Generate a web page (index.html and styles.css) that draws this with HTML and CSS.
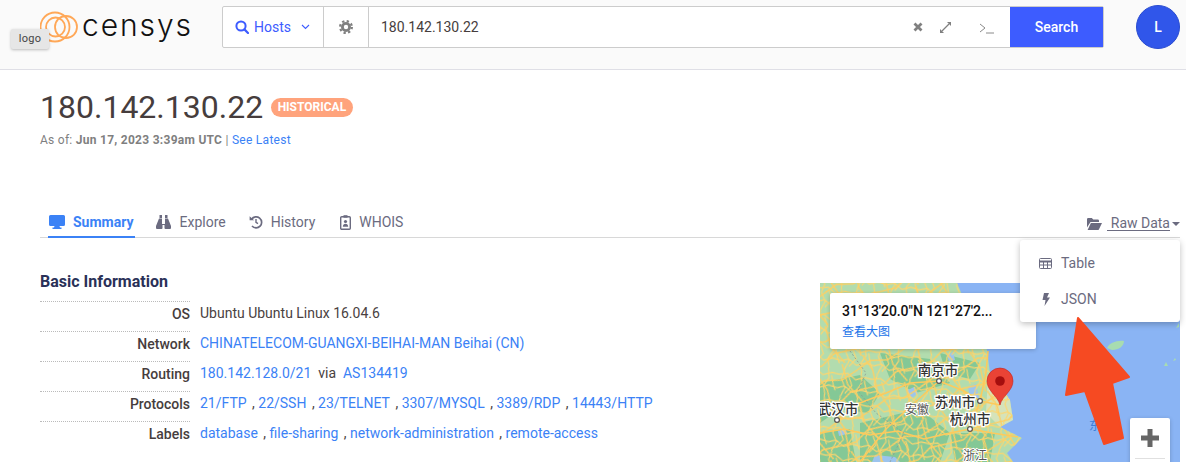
FILE: index.html
```html
<!DOCTYPE html>
<html lang="en">
<head>
<meta charset="utf-8">
<title>180.142.130.22 - Censys</title>
<link rel="stylesheet" href="styles.css">
</head>
<body>
<header class="topbar">
  <div class="brand">
    <svg class="brand-mark" width="42" height="36" viewBox="0 0 42 36"><g fill="none" stroke="#ffa858" stroke-width="1.800"><circle cx="15" cy="18" r="14.500"/><circle cx="15.500" cy="18" r="9.500"/><circle cx="26" cy="18" r="11"/></g></svg>
    <span class="brand-name">censys</span>
    <span class="logo-tip">logo</span>
  </div>
  <div class="search">
    <div class="search-type">
      <svg width="14" height="14" viewBox="0 0 14 14"><circle cx="6" cy="6" r="4.600" fill="none" stroke="#3d5cff" stroke-width="2"/><path d="M9.400 9.400l3.600 3.600" stroke="#3d5cff" stroke-width="2.200" stroke-linecap="round"/></svg>
      <span>Hosts</span>
      <svg class="chev" width="9" height="6" viewBox="0 0 9 6"><path d="M1 1l3.500 3.500L8 1" fill="none" stroke="#3d5cff" stroke-width="1.100"/></svg>
    </div>
    <div class="search-gear">
      <svg width="14" height="14" viewBox="0 0 14 14"><circle cx="7" cy="7" r="3.600" fill="none" stroke="#808080" stroke-width="2.800"/><circle cx="7" cy="7" r="5.900" fill="none" stroke="#808080" stroke-width="2.200" stroke-dasharray="2.300 2.330"/></svg>
    </div>
    <div class="search-input">180.142.130.22</div>
    <div class="search-tools">
      <svg width="10" height="10" viewBox="0 0 10 10"><path d="M1.500 1.500l7 7M8.500 1.500l-7 7" stroke="#808080" stroke-width="2.800"/></svg>
      <svg width="13" height="13" viewBox="0 0 13 13"><path d="M8 1h4v4zM1 12V8l4 4z" fill="#808080"/><path d="M10 3L3 10" stroke="#808080" stroke-width="1.300"/></svg>
      <svg class="term" width="16" height="11" viewBox="0 0 16 11"><path d="M1 1l5 4-5 4" fill="none" stroke="#8a8a8a"/><path d="M7 10h8" stroke="#8a8a8a"/></svg>
    </div>
    <button class="search-btn">Search</button>
  </div>
  <div class="avatar">L</div>
</header>

<main class="page">
  <div class="title-row">
    <h1>180.142.130.22</h1>
    <span class="badge">HISTORICAL</span>
  </div>
  <p class="as-of">As of: <b>Jun 17, 2023 3:39am UTC</b> | <a>See Latest</a></p>

  <nav class="tabs">
    <a class="tab active">
      <svg width="16" height="14" viewBox="0 0 16 14"><path d="M1.500 0h13A1.500 1.500 0 0 1 16 1.500v8a1.500 1.500 0 0 1-1.500 1.500H10.500l.5 1.500h1.500V14h-9v-1.500H5l.5-1.500H1.500A1.500 1.500 0 0 1 0 9.500v-8A1.500 1.500 0 0 1 1.500 0z" fill="#3b82f6"/></svg>
      Summary
    </a>
    <a class="tab tab-explore">
      <svg width="15" height="14" viewBox="0 0 15 14"><path d="M3.500 0h2.500v3h-2.500zM9 0h2.500v3H9zM3 3.500h3V9h3V3.500h3l3 7.500v2a1 1 0 0 1-1 1H9.500a1 1 0 0 1-1-1V10h-2v3a1 1 0 0 1-1 1H1a1 1 0 0 1-1-1v-2z" fill="#6b6b80"/></svg>
      Explore
    </a>
    <a class="tab tab-history">
      <svg width="14" height="14" viewBox="0 0 14 14"><path d="M2.600 4.200A5.500 5.500 0 1 1 3 11" fill="none" stroke="#6b6b80" stroke-width="1.700"/><path d="M.6 1.200l4.500 4H.6z" fill="#6b6b80"/><path d="M7 4v3.300l2 1.300" fill="none" stroke="#6b6b80" stroke-width="1.400"/></svg>
      History
    </a>
    <a class="tab tab-whois">
      <svg width="11" height="15" viewBox="0 0 11 15"><rect x=".7" y="1.700" width="9.600" height="12.600" rx="1" fill="none" stroke="#6b6b80" stroke-width="1.400"/><rect x="3.500" y=".2" width="4" height="2.500" fill="#6b6b80"/><circle cx="5.500" cy="6.500" r="1.600" fill="#6b6b80"/><path d="M2.800 11.800c0-4 5.400-4 5.400 0z" fill="#6b6b80"/></svg>
      WHOIS
    </a>
    <a class="raw">
      <svg width="15" height="12" viewBox="0 0 15 12"><path d="M0 1.200A1.200 1.200 0 0 1 1.200 0h3.600l1.500 1.500h4.500A1.200 1.200 0 0 1 12 2.700V4H3.500L0 9.500z" fill="#6b6b80"/><path d="M3.900 5H15l-3 6.200a1 1 0 0 1-.8.800H.6z" fill="#6b6b80"/></svg>
      <span class="raw-label">&nbsp;Raw Data</span><i class="caret"></i>
    </a>
  </nav>

  <div class="content">
    <section class="info">
      <h2>Basic Information</h2>
      <dl class="facts">
        <div class="fact"><dt>OS</dt><dd>Ubuntu Ubuntu Linux 16.04.6</dd></div>
        <div class="fact"><dt>Network</dt><dd><a>CHINATELECOM-GUANGXI-BEIHAI-MAN Beihai (CN)</a></dd></div>
        <div class="fact"><dt>Routing</dt><dd><a>180.142.128.0/21</a>&nbsp; via &nbsp;<a>AS134419</a></dd></div>
        <div class="fact"><dt>Protocols</dt><dd class="list"><a>21/FTP</a> , <a>22/SSH</a> , <a>23/TELNET</a> , <a>3307/MYSQL</a> , <a>3389/RDP</a> , <a>14443/HTTP</a></dd></div>
        <div class="fact"><dt>Labels</dt><dd class="list"><a>database</a> , <a>file-sharing</a> , <a>network-administration</a> , <a>remote-access</a></dd></div>
      </dl>
    </section>

    <div class="map">
      <svg class="map-canvas" width="360" height="179" viewBox="0 0 360 179">
        <defs>
          <pattern id="roads-a" width="46" height="38" patternUnits="userSpaceOnUse" patternTransform="rotate(9) scale(.72)">
            <path d="M0 7 12 4 24 11 36 6 46 7M0 26 10 22 22 29 34 24 46 26M7 0 4 12 11 24 6 38M30 0 33 14 27 26 31 38M14 8 20 20 12 32M36 10 40 22 44 30" fill="none" stroke="#fdd66e" stroke-width="1.500"/>
          </pattern>
          <pattern id="roads-b" width="62" height="52" patternUnits="userSpaceOnUse" patternTransform="rotate(-24) scale(.8)">
            <path d="M0 14 18 10 38 18 62 14M0 40 22 44 42 36 62 40M12 0 16 22 10 52M46 0 42 26 50 52" fill="none" stroke="#fecf62" stroke-width="1.700"/>
          </pattern>
        </defs>
        <rect width="360" height="179" fill="#8ab4f4"/>
        <path d="M0 0H137L150 30 167 67 170 90 178 100 190 117 193 137 180 144 202 155 187 170 193 179H0z" fill="#b2dcae"/>
        <g fill="#84c896">
          <path d="M0 100 40 92 60 110 48 130 20 126 0 140z"/>
          <path d="M60 70 110 76 130 100 96 110 70 96z"/>
          <path d="M40 140 100 126 130 150 120 179H40z"/>
          <path d="M130 150 175 150 170 179H135z"/>
          <path d="M120 70 160 80 150 96 126 90z"/>
          <path d="M0 150 30 146 36 179H0z"/>
        </g>
        <path d="M168 92 178 100 190 117 193 137 180 144 166 130z" fill="#f2e9c4" opacity=".55"/>
        <g fill="#9cc4ee">
          <path d="M86 108l8-4 4 6-6 5z"/><path d="M148 104l8-3 3 14-8 5z"/><path d="M127 72l6-3 2 8-6 2z"/><path d="M18 148l8-2 1 5-8 2z"/><path d="M55 172l20 2 5 5H52z"/>
        </g>
        <path d="M0 0H137L150 30 167 67 170 90 178 100 190 117 193 137 180 144 202 155 187 170 193 179H0z" fill="url(#roads-a)"/>
        <path d="M0 0H137L150 30 167 67 170 90 178 100 190 117 193 137 180 144 202 155 187 170 193 179H0z" fill="url(#roads-b)"/>
        <g fill="none" stroke="#fdca5c" stroke-width="1.600">
          <path d="M17 137 40 120 66 110 90 100 119 98"/>
          <path d="M119 98 144 108 160 118 180 122"/>
          <path d="M150 146 160 118 166 90 168 68"/>
          <path d="M0 150 24 146 50 152 78 148 104 156 130 150 150 146 172 150 198 154"/>
          <path d="M119 98 92 122 66 146 40 179"/>
        </g>
        <g fill="none" stroke="#8d9a92" stroke-width=".8" stroke-dasharray="2 2"><path d="M30 68 46 90 38 108 56 130 84 150 70 179"/></g>
        <g fill="#a8dcb0"><path d="M287 65c2-5 10-8 17-7 0 5-5 9-12 9z"/><path d="M344 83l2-4 2 4z"/><path d="M353 78l2-3 1 2z"/><path d="M356 45l3-5v4z"/></g>
        <text class="map-sea" x="269" y="147">东</text>
        <g class="map-city">
          <text x="118" y="92">南京市</text>
          <text x="135" y="124">苏州市</text>
          <text x="18" y="131">武汉市</text>
          <text x="150" y="141">杭州市</text>
        </g>
        <g class="map-region">
          <text x="97" y="131">安徽</text>
          <text x="155" y="177">浙江</text>
        </g>
        <g fill="#fff" stroke="#555" stroke-width="1.200">
          <circle cx="119" cy="98" r="2.400"/><circle cx="160" cy="118" r="2.400"/><circle cx="17" cy="137" r="2.400"/><circle cx="150" cy="146" r="2.400"/>
        </g>
        <path d="M180 122c-2-9-13-14-13-24a13 13 0 0 1 26 0c0 10-11 15-13 24z" fill="#ea4335" stroke="#c5221f" stroke-width=".6"/>
        <circle cx="180" cy="98" r="4.800" fill="#a50e0e"/>
      </svg>
      <div class="map-pop">
        <div class="map-pop-title">31°13'20.0"N 121°27'2...</div>
        <a class="map-pop-link">查看大图</a>
      </div>
      <div class="zoom-ctl">
        <svg width="18" height="18" viewBox="0 0 18 18"><path d="M0 9h18M9 0v18" stroke="#666" stroke-width="5"/></svg>
        <span class="zoom-rule"></span>
      </div>
    </div>
  </div>
</main>

<div class="menu">
  <a class="menu-item">
    <svg width="13" height="11" viewBox="0 0 13 11"><rect x=".5" y=".5" width="12" height="10" rx="1" fill="none" stroke="#6b6b80"/><path d="M.5 3.500h12" stroke="#6b6b80" stroke-width="2"/><path d="M.5 7h12M4.500 3v7.500M8.500 3v7.500" stroke="#6b6b80"/></svg>
    Table
  </a>
  <a class="menu-item">
    <svg width="13" height="13" viewBox="0 0 13 13"><path d="M5 0h5L8 4.500h3L5.500 13 6.500 7H3.500z" fill="#6b6b80"/></svg>
    JSON
  </a>
</div>

<svg class="arrow" width="80" height="140" viewBox="0 0 80 140"><path d="M17 7 68 66 51 72 62 127 43 133 24 80 5 84z" fill="#f64a22" stroke="#f64a22" stroke-width="2" stroke-linejoin="round"/></svg>
</body>
</html>
```

FILE: styles.css
```css
* { box-sizing: border-box; }
html, body { margin: 0; height: 462px; overflow: hidden; }
body { font-family: Roboto, "Noto Sans CJK SC", sans-serif; font-size: 14px; color: #4a4141; background: #fff; position: relative; }

.topbar { height: 70px; background: #fafafa; border-bottom: 1px solid #dfdfe6; display: flex; align-items: flex-start; padding: 6px 6px 0 40px; }
.brand { width: 182px; height: 42px; display: flex; align-items: center; position: relative; }
.brand-mark { flex: none; }
.brand-name { font-family: Inter, sans-serif; font-weight: 300; font-size: 30px; letter-spacing: 1.900px; color: #111; margin-left: 0; line-height: 42px; margin-top: -4px; }
.logo-tip { position: absolute; left: -29px; top: 23px; width: 38px; height: 20px; background: #e6e6e6; border-radius: 2px; box-shadow: 0 1px 3px rgba(0,0,0,.25); font-size: 11px; line-height: 20px; text-align: center; color: #444; letter-spacing: .3px; }

.search { width: 882px; height: 42px; display: flex; border: 1px solid #cccccc; border-radius: 2px; background: #fff; }
.search-type { width: 101px; border-right: 1px solid #ccc; display: flex; align-items: center; padding-left: 12px; gap: 5px; color: #3d5cff; font-size: 14px; }
.search-type .chev { margin-left: 5px; }
.search-gear { width: 45px; border-right: 1px solid #ccc; display: flex; align-items: center; justify-content: center; }
.search-input { flex: 1; display: flex; align-items: center; padding-left: 12px; font-size: 14px; color: #463d3d; }
.search-tools { display: flex; align-items: center; gap: 16px; padding-right: 15px; }
.search-tools .term { margin-left: 11px; margin-top: 3px; }
.search-btn { width: 93px; border: 0; background: #3d5cff; color: #fff; font: 500 14px Roboto, sans-serif; padding: 0; }
.avatar { width: 44px; height: 44px; margin-left: auto; margin-top: -1px; border-radius: 50%; background: #3056ea; border: 1px solid #2a4cd0; color: #fff; font-weight: 500; font-size: 14px; display: flex; align-items: center; justify-content: center; }

.page { padding: 0 6px 0 40px; }
.title-row { display: flex; align-items: center; height: 36px; margin-top: 19px; gap: 8px; }
h1 { margin: 0; font-size: 32px; font-weight: 400; color: #463d3d; line-height: 36px; }
.badge { background: #ffa37c; color: #fff; font-weight: 700; font-size: 12px; height: 19px; line-height: 19px; padding: 0 6.500px; border-radius: 10px; margin-top: 1px; }
.as-of { margin: 7px 0 0; font-size: 12px; line-height: 16px; color: #7f7f7f; letter-spacing: .27px; }
.as-of a { color: #3b82f6; }

.tabs { margin-top: 60px; height: 30px; border-bottom: 1px solid #d8d8d8; display: flex; align-items: stretch; padding-left: 8px; color: #6b6b80; font-size: 14px; }
.tab { display: flex; align-items: center; gap: 8px; height: 30px; padding: 0 1px 2px; margin-right: 21px; }
.tab.active { color: #3b82f6; font-weight: 700; border-bottom: 2px solid #3b82f6; padding-bottom: 0; }
.tab-explore { gap: 9px; margin-left: -1px; }
.tab-history { margin-right: 23px; }
.raw { margin-left: auto; display: flex; align-items: center; padding-top: 2px; }
.raw-label { margin-left: 5px; border-bottom: 1px solid #6b6b80; line-height: 14px; }
.caret { width: 0; height: 0; border: 4px solid transparent; border-top-color: #6b6b80; border-bottom: 0; margin-left: 2px; }

.content { display: flex; justify-content: space-between; margin-top: 33px; }
h2 { margin: 0; font-size: 16px; font-weight: 700; color: #2a3158; line-height: 22px; letter-spacing: 0; }
.facts { margin: 8px 0 0; }
.fact { display: flex; height: 30px; }
dt { width: 150px; flex: none; border-top: 1px dotted #bbb; text-align: right; font-weight: 500; padding-top: 3px; line-height: 18px; color: #463d3d; }
dd { margin: 0 0 0 10px; padding-top: 3px; line-height: 18px; white-space: nowrap; }
dd a { color: #3b82f6; }
dd.list a { margin-right: 2px; }

.map { width: 360px; height: 179px; position: relative; overflow: hidden; flex: none; margin-top: 12px; }
.map-canvas { display: block; }
.map-city text { font: 500 13.500px "Noto Sans CJK SC", sans-serif; text-anchor: middle; fill: #333; stroke: #fff; stroke-width: 2.500px; paint-order: stroke; }
.map-region text { font: 400 12px "Noto Sans CJK SC", sans-serif; text-anchor: middle; fill: #555; stroke: #fff; stroke-width: 2px; paint-order: stroke; }
.map-sea { font: 400 12px "Noto Sans CJK SC", sans-serif; fill: #3f7fd8; }
.map-pop { position: absolute; left: 10px; top: 10px; width: 206px; height: 56px; background: #fff; border-radius: 2px; box-shadow: 0 1px 4px rgba(0,0,0,.2); padding: 9px 12px; }
.map-pop-title { font-weight: 500; font-size: 14px; line-height: 18px; color: #111; letter-spacing: -.08px; }
.map-pop-link { display: block; font-size: 12px; line-height: 16px; color: #1a73e8; margin-top: 3px; font-family: "Noto Sans CJK SC", sans-serif; }
.zoom-ctl { position: absolute; right: 10px; top: 135px; width: 40px; height: 60px; background: #fff; border-radius: 2px; box-shadow: 0 1px 4px rgba(0,0,0,.2); display: flex; flex-direction: column; align-items: center; padding-top: 11px; }
.zoom-ctl svg { display: block; }
.zoom-rule { width: 30px; height: 1px; background: #e0e0e0; margin-top: 11px; }

.menu { position: absolute; left: 1020px; top: 240px; width: 160px; height: 82px; background: #fff; border-radius: 3px; box-shadow: 0 2px 6px rgba(0,0,0,.25); padding-top: 5px; color: #6b6b80; font-size: 14px; }
.menu-item { display: flex; align-items: center; height: 36px; padding-left: 19px; gap: 9px; }
.arrow { position: absolute; left: 1061px; top: 311px; }
```
